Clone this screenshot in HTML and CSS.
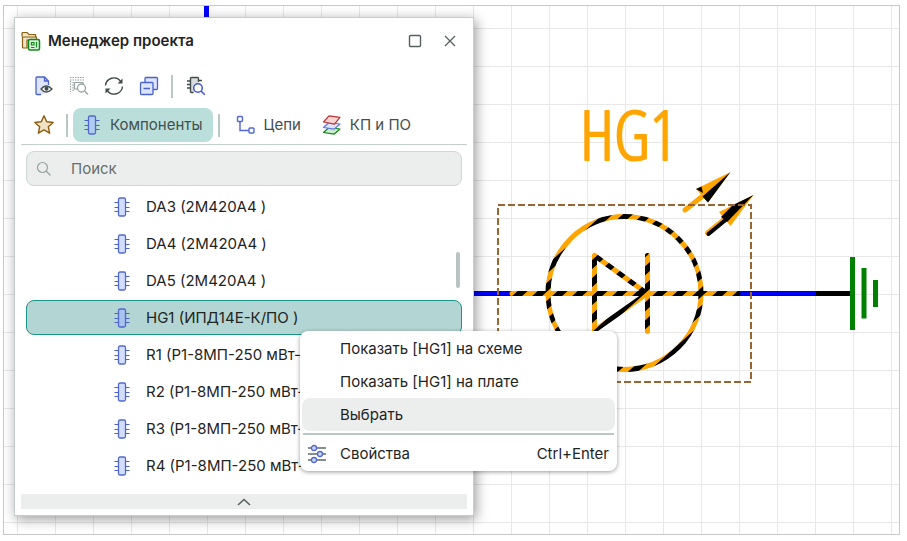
FILE: index.html
```html
<!DOCTYPE html>
<html lang="ru">
<head>
<meta charset="utf-8">
<title>Менеджер проекта</title>
<link rel="stylesheet" href="styles.css">
</head>
<body>
<svg class="defs" aria-hidden="true">
  <defs>
    <symbol id="chip" viewBox="0 0 16 20">
      <path d="M.5 5.500h4M.5 10.500h4M.5 14.500h4M11.500 5.500h4M11.500 10.500h4M11.500 14.500h4" fill="none" stroke="#4a62cb" stroke-width="1.200"/>
      <rect x="4.500" y="1" width="7" height="18" rx="1.500" fill="var(--chip, #d3defd)" stroke="#5068cf" stroke-width="1.300"/>
    </symbol>
  </defs>
</svg>
<main class="canvas">
  <svg class="schematic" viewBox="4 6 895 528" preserveAspectRatio="xMinYMin slice" role="img" aria-label="Схема с элементом HG1">
    <defs>
      <pattern id="grid" x="17" y="28" width="38" height="38" patternUnits="userSpaceOnUse">
        <path d="M.5 0v38M0 .5h38" stroke="#e8e8e8" fill="none"/>
      </pattern>
      <pattern id="hatch" x="1" y="0" width="20" height="18" patternUnits="userSpaceOnUse">
        <rect width="20" height="18" fill="#ffa500"/>
        <path d="M0 0H10L0 9ZM20 0V9L10 18H0Z" fill="#000"/>
      </pattern>
    </defs>
    <rect x="4" y="6" width="895" height="528" fill="url(#grid)"/>
    <path d="M206.500 6v60" stroke="#00f" stroke-width="5"/>
    <text x="580" y="160" class="ref-label">HG1</text>

    <!-- wires and ground -->
    <path d="M470 293.500h42M738 293.500h80" stroke="#000080" stroke-width="5"/>
    <path d="M470 293.500h42M738 293.500h80" stroke="#00f" stroke-width="4"/>
    <path d="M816 293.500h36" stroke="#000" stroke-width="5"/>
    <path d="M852.500 257v73M864 268v50.500M875.500 280v27" stroke="#008000" stroke-width="5"/>

    <!-- selected diode -->
    <g class="hatched">
      <circle cx="624.500" cy="293" r="76.500"/>
      <path d="M512 293.500h226M594.500 255.500v75L647 293.500 594.500 255.500M647.500 255.500v76"/>
    </g>

    <!-- light arrows -->
    <path d="M685 210L704 195" stroke="#ffa500" stroke-width="5" stroke-linecap="round"/>
    <path d="M730.500 172L696 189L708 202.500Z" fill="#ffa500"/>
    <path d="M730.500 172L708 202.500L702.500 196.500ZM696 189L701.500 186.500L703 193Z" fill="#000"/>
    <path d="M753.500 195L719 212L730.500 226Z" fill="#ffa500"/>
    <path d="M707.500 233L726 218" stroke="#ffa500" stroke-width="5" stroke-linecap="round"/>
    <path d="M708.500 234L728 218" stroke="#000" stroke-width="4" stroke-linecap="round"/>
    <path d="M753.500 195L727 222L721 217L733 205Z" fill="#000"/>

    <rect x="498" y="205" width="253" height="177" fill="none" stroke="#963" stroke-width="2" stroke-dasharray="7 3"/>
  </svg>

  <section class="window" aria-labelledby="window-title">
    <header class="titlebar">
      <svg class="app-icon" width="20" height="20" viewBox="0 0 20 20" fill="none" aria-hidden="true">
        <path d="M1 5.500V2.500q0-1 1-1h4l2 2h6.500v3" fill="#efe3c8" stroke="#8a5e0e" stroke-width="1.200"/>
        <path d="M6 17H2.500q-1 0-1-1V6H15.500v3H6Z" fill="#efe3c8" stroke="#8a5e0e" stroke-width="1.200"/>
        <rect x="7.500" y="8.500" width="11" height="10.500" rx="1.500" fill="#d9f2da" stroke="#14851c" stroke-width="1.500"/>
        <path d="M10.500 11.500h2.500v2.500h-2.500zM15.500 11v5.500M10 16.500h3.500" stroke="#14851c" stroke-width="1.200"/>
      </svg>
      <h1 id="window-title">Менеджер проекта</h1>
      <button class="icon-button" type="button" aria-label="Развернуть"><svg width="14" height="14" viewBox="0 0 14 14" fill="none"><rect x="1.500" y="1.500" width="11" height="11" rx="1" stroke="#56615f" stroke-width="1.400"/></svg></button>
      <button class="icon-button" type="button" aria-label="Закрыть"><svg width="14" height="14" viewBox="0 0 14 14" fill="none"><path d="M2 2l10 10M12 2L2 12" stroke="#56615f" stroke-width="1.300"/></svg></button>
    </header>

    <div class="toolbar" role="toolbar" aria-label="Действия">
      <button class="icon-button" type="button" aria-label="Просмотр"><svg width="20" height="20" viewBox="0 0 20 20" fill="none"><path d="M3 1h7.500l4 4v9.500L9 18.500H3q-1 0-1-1V2q0-1 1-1z" fill="#dde5fd"/><path d="M7 18.500H3q-1 0-1-1V2q0-1 1-1h7.500l4 4v4M10.500 1v4h4" stroke="#4a62cb" stroke-width="1.300"/><path d="M7 13q5-6 11 0q-6 6-11 0z" fill="#fff" stroke="#414b4a" stroke-width="1.300"/><circle cx="12.500" cy="12.800" r="2" fill="#414b4a"/></svg></button>
      <button class="icon-button" type="button" aria-label="Найти выделенное" disabled><svg width="20" height="20" viewBox="0 0 20 20" fill="none" stroke="#98a4a2"><path d="M1 1.500h14M1 4h14M1.500 5v11M4 6v10" stroke-width="1.200" stroke-dasharray="1.500 1"/><path d="M8 13H5.500V6.500H14V8" stroke-width="1.200"/><circle cx="12.500" cy="12" r="4" stroke-width="1.300" fill="#fff"/><path d="M15.500 15l3.500 3.500" stroke-width="1.400"/></svg></button>
      <button class="icon-button" type="button" aria-label="Обновить"><svg width="20" height="20" viewBox="0 0 20 20" fill="none"><path d="M1.500 9.500a8.500 8.500 0 0 1 15-4.500M18.500 10.500a8.500 8.500 0 0 1-15 4.500" stroke="#414b4a" stroke-width="1.400"/><path d="M18.500 2.500v5h-5zM1.500 17.500v-5h5z" fill="#414b4a"/></svg></button>
      <button class="icon-button" type="button" aria-label="Свернуть все"><svg width="20" height="20" viewBox="0 0 20 20" fill="#dde5fd" stroke="#4a62cb" stroke-width="1.300"><rect x="6" y="1.500" width="12.500" height="12" rx="1"/><rect x="1.500" y="6.500" width="12.500" height="12" rx="1"/><path d="M4.500 12.500h6.500" stroke-width="1.500"/></svg></button>
      <span class="divider"></span>
      <button class="icon-button" type="button" aria-label="Найти компонент"><svg width="20" height="20" viewBox="0 0 20 20" fill="none"><path d="M4.500 2.500q0-1 1-1h6q1 0 1 1V8l-3 2-1 6.500H5.500q-1 0-1-1z" fill="#d8dcdb"/><path d="M7.500 16.500h-2q-1 0-1-1v-13q0-1 1-1h6q1 0 1 1V6M1 5h3.500M1 8.500h3.500M1 12h3.500M12.500 4.500H16" stroke="#414b4a" stroke-width="1.400"/><circle cx="12" cy="12" r="4.300" stroke="#4058cf" stroke-width="1.500" fill="#fff"/><path d="M15 15l3.800 3.800" stroke="#4058cf" stroke-width="1.600"/></svg></button>
    </div>

    <nav class="tabs" aria-label="Разделы">
      <button class="icon-button" type="button" aria-label="Избранное"><svg width="22" height="22" viewBox="0 0 22 22"><path d="M11 1.800l2.700 6 6.500.7-4.900 4.300 1.400 6.400L11 15.900l-5.700 3.300 1.400-6.400L1.800 8.500l6.500-.7z" fill="#efe3c8" stroke="#8a5e0e" stroke-width="1.400" stroke-linejoin="round"/></svg></button>
      <span class="divider"></span>
      <button class="tab active" type="button"><svg class="chip" width="16" height="20"><use href="#chip"/></svg>Компоненты</button>
      <span class="divider"></span>
      <button class="tab" type="button"><svg width="20" height="20" viewBox="0 0 20 20" fill="#fff" stroke="#5068cf" stroke-width="1.400"><path d="M4 6.500V15.500H13" fill="none"/><rect x="1.500" y="1.500" width="5" height="5" rx="1"/><rect x="13" y="13" width="5" height="5" rx="1"/></svg>Цепи</button>
      <button class="tab" type="button"><svg width="20" height="20" viewBox="0 0 20 20" stroke-linejoin="round" stroke-width="1.200"><path d="M7 12.500l11 1.500-6 5.200-10.500-1.700z" fill="#c9ecca" stroke="#14851c"/><path d="M7 7.500L18 9l-6 5.200L1.500 12.500z" fill="#dde5fd" stroke="#6479dd"/><path d="M7 .8L18 2.300 12.500 9.200 1.500 7z" fill="#fbd3d3" stroke="#bb3336"/></svg>КП и ПО</button>
    </nav>

    <label class="search">
      <svg width="16" height="16" viewBox="0 0 16 16" fill="none" stroke="#98a4a2" stroke-width="1.200" aria-hidden="true"><circle cx="6.500" cy="6.500" r="5"/><path d="M10 10l4.500 4.500"/></svg>
      <input type="search" placeholder="Поиск" aria-label="Поиск">
    </label>

    <div class="list">
      <ul class="rows">
        <li><svg class="chip"><use href="#chip"/></svg>DA3 (2М420А4 )</li>
        <li><svg class="chip"><use href="#chip"/></svg>DA4 (2М420А4 )</li>
        <li><svg class="chip"><use href="#chip"/></svg>DA5 (2М420А4 )</li>
        <li class="selected"><svg class="chip"><use href="#chip"/></svg>HG1 (ИПД14Е-К/ПО )</li>
        <li><svg class="chip"><use href="#chip"/></svg>R1 (Р1-8МП-250 мВт-</li>
        <li><svg class="chip"><use href="#chip"/></svg>R2 (Р1-8МП-250 мВт-</li>
        <li><svg class="chip"><use href="#chip"/></svg>R3 (Р1-8МП-250 мВт-</li>
        <li><svg class="chip"><use href="#chip"/></svg>R4 (Р1-8МП-250 мВт-</li>
      </ul>
      <span class="scroll-thumb"></span>
    </div>

    <button class="collapse" type="button" aria-label="Свернуть"><svg width="14" height="8" viewBox="0 0 14 8" fill="none"><path d="M1 7l6-5.500L13 7" stroke="#56615f" stroke-width="1.600"/></svg></button>
  </section>

  <div class="menu" role="menu">
    <button type="button" role="menuitem"><span class="menu-icon"></span>Показать [HG1] на схеме</button>
    <button type="button" role="menuitem"><span class="menu-icon"></span>Показать [HG1] на плате</button>
    <button type="button" role="menuitem" class="hover"><span class="menu-icon"></span>Выбрать</button>
    <hr>
    <button type="button" role="menuitem"><span class="menu-icon"><svg width="20" height="20" viewBox="0 0 20 20"><path d="M1 4h18M1 10h18M1 16h18" stroke="#5c6b69" stroke-width="1.400"/><g fill="#cfdafd" stroke="#5068cf" stroke-width="1.300"><circle cx="7" cy="4" r="2.500"/><circle cx="13" cy="10" r="2.500"/><circle cx="7" cy="16" r="2.500"/></g></svg></span>Свойства<kbd>Ctrl+Enter</kbd></button>
  </div>
</main>
</body>
</html>
```

FILE: styles.css
```css
* {
  box-sizing: border-box;
}

body {
  margin: 0;
  padding: 5px 7px 6px 3px;
  background: #fff;
  color: #1f2423;
  font: 15px/20px Inter, "Liberation Sans", sans-serif;
}

button {
  border: 0;
  padding: 0;
  background: none;
  color: inherit;
  font: inherit;
}

.defs {
  position: absolute;
  width: 0;
  height: 0;
}

.canvas {
  position: relative;
  display: flex;
  min-height: calc(100vh - 11px);
  border: 1px solid #c8c8c8;
  overflow: hidden;
}

.schematic {
  flex: 1;
  width: 100%;
}

.hatched {
  fill: none;
  stroke: url(#hatch);
  stroke-width: 5;
  stroke-linecap: round;
}

.ref-label {
  fill: #ffa500;
  stroke: #ffa500;
  stroke-width: 2;
  stroke-linejoin: round;
  font: 68px "Open Sans Condensed Light", "Open Sans", sans-serif;
}

.window {
  position: absolute;
  top: 11px;
  left: 10px;
  display: flex;
  flex-direction: column;
  width: 460px;
  padding: 0 6px 6px;
  border: 1px solid #c3cfcd;
  background: #fff;
  box-shadow: 2px 3px 12px rgba(0, 0, 0, 0.4);
}

.titlebar {
  display: flex;
  align-items: center;
  height: 46px;
}

.titlebar h1 {
  flex: 1;
  margin: 0 0 0 7px;
  font-size: 15px;
  font-weight: 600;
}

.icon-button {
  display: grid;
  place-items: center;
  width: 35px;
  height: 34px;
}

.toolbar,
.tabs {
  display: flex;
  align-items: center;
  padding-left: 5px;
}

.toolbar {
  height: 44px;
}

.divider {
  width: 2px;
  height: 23px;
  margin: 0 5px;
  background: #b9c7c5;
}

.tabs {
  padding-bottom: 2px;
  border-bottom: 1px solid #c3cfcd;
  color: #434f4d;
}

.tab {
  display: flex;
  align-items: center;
  gap: 8px;
  height: 34px;
  padding: 0 10px 0 11px;
  border-radius: 8px;
}

.tab.active {
  gap: 10px;
  background: #badeda;
  --chip: #aecbf0;
}

.search {
  display: flex;
  align-items: center;
  height: 35px;
  margin: 6px 5px 3px;
  padding: 0 9px;
  border: 1px solid #cbd8d5;
  border-radius: 8px;
  background: #ebeeed;
}

.search input {
  flex: 1;
  min-width: 0;
  margin-left: 19px;
  padding: 0;
  border: 0;
  outline: 0;
  background: none;
  font: inherit;
}

.search input::placeholder {
  color: #66706e;
  opacity: 1;
}

.list {
  position: relative;
  margin: 0 5px;
}

.rows {
  display: grid;
  gap: 2px;
  margin: 0;
  padding: 0;
  list-style: none;
}

.rows li {
  display: flex;
  align-items: center;
  gap: 16px;
  height: 35px;
  padding-left: 87px;
  border: 1px solid transparent;
  border-radius: 8px;
  white-space: pre;
}

.rows .selected {
  border-color: #1a958b;
  background: #b3d5d3;
  --chip: #a9c2ee;
}

.chip {
  width: 16px;
  height: 20px;
}

.scroll-thumb {
  position: absolute;
  top: 63px;
  right: 2px;
  width: 4px;
  height: 36px;
  border-radius: 2px;
  background: #b9c3c1;
}

.collapse {
  display: grid;
  place-items: center;
  height: 15px;
  margin-top: 11px;
  background: #ebeeed;
}

.menu {
  position: absolute;
  top: 325px;
  left: 296px;
  width: 317px;
  padding: 1px 2px;
  border-radius: 8px;
  background: #fff;
  box-shadow: 0 1px 4px rgba(0, 0, 0, 0.4);
}

.menu button {
  display: flex;
  align-items: center;
  width: 100%;
  height: 33px;
  padding: 0 6px 0 5px;
  border-radius: 8px;
}

.menu .hover {
  background: #ebeeed;
}

.menu hr {
  height: 2px;
  margin: 2px 1px;
  border: 0;
  background: #b9c7c5;
}

.menu-icon {
  width: 20px;
  height: 20px;
  margin-right: 13px;
}

.menu kbd {
  margin-left: auto;
  font: inherit;
}
```
